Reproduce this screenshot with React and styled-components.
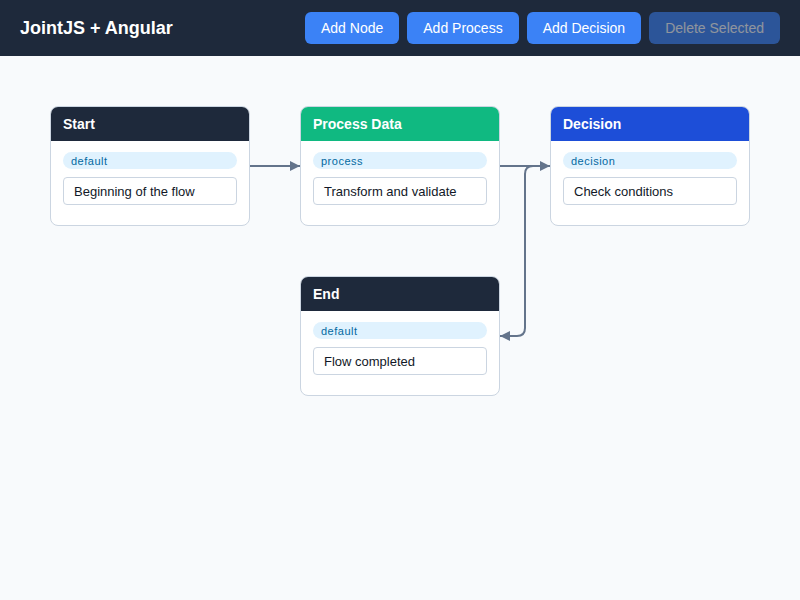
import React from "react"
import styled, { createGlobalStyle } from "styled-components"

const GlobalStyle = createGlobalStyle`
  html, body { margin: 0; padding: 0; }
  body {
    font-family: "Liberation Sans", Arial, sans-serif;
    background: #f8fafc;
  }
  * { box-sizing: border-box; }
`

const Shell = styled.div`
  width: 800px;
  height: 600px;
  display: flex;
  flex-direction: column;
  overflow: hidden;
`

const Toolbar = styled.header`
  height: 56px;
  flex: 0 0 56px;
  background: #1e293b;
  display: flex;
  align-items: center;
  justify-content: space-between;
  padding: 0 20px;
`

const Title = styled.h1`
  margin: 0;
  color: #ffffff;
  font-size: 18px;
  font-weight: 700;
`

const Actions = styled.div`
  display: flex;
  gap: 8px;
`

const ToolButton = styled.button`
  height: 32px;
  padding: 0 16px;
  border: none;
  border-radius: 6px;
  background: #3b82f6;
  color: #ffffff;
  font-family: inherit;
  font-size: 14px;
  cursor: pointer;
  &:disabled {
    opacity: 0.5;
    cursor: default;
  }
`

const Canvas = styled.div`
  position: relative;
  flex: 1;
  background: #f8fafc;
`

const Links = styled.svg`
  position: absolute;
  left: 0;
  top: 0;
  width: 800px;
  height: 544px;
  pointer-events: none;
`

const NodeCard = styled.div`
  position: absolute;
  width: 200px;
  height: 120px;
  background: #ffffff;
  border: 1px solid #cbd5e1;
  border-radius: 8px;
  overflow: hidden;
`

const NodeHeader = styled.div`
  height: 34px;
  background: ${(p) => p.$color};
  color: #ffffff;
  font-size: 14px;
  font-weight: 700;
  display: flex;
  align-items: center;
  padding: 0 12px;
`

const NodeBody = styled.div`
  padding: 11px 12px;
  display: flex;
  flex-direction: column;
  gap: 8px;
`

const Tag = styled.div`
  height: 17px;
  border-radius: 9px;
  background: #e0f2fe;
  color: #0369a1;
  font-size: 11px;
  letter-spacing: 0.5px;
  line-height: 19px;
  padding: 0 8px;
`

const Field = styled.div`
  height: 28px;
  border: 1px solid #cbd5e1;
  border-radius: 4px;
  font-size: 13px;
  color: #111827;
  display: flex;
  align-items: center;
  padding: 0 10px;
`

const nodes = [
  { id: "start", x: 50, y: 50, title: "Start", type: "default", label: "Beginning of the flow", color: "#1e293b" },
  { id: "process", x: 300, y: 50, title: "Process Data", type: "process", label: "Transform and validate", color: "#10b981" },
  { id: "decision", x: 550, y: 50, title: "Decision", type: "decision", label: "Check conditions", color: "#1d4ed8" },
  { id: "end", x: 300, y: 220, title: "End", type: "default", label: "Flow completed", color: "#1e293b" },
]

const Node = ({ node }) => (
  <NodeCard style={{ left: node.x, top: node.y }}>
    <NodeHeader $color={node.color}>{node.title}</NodeHeader>
    <NodeBody>
      <Tag>{node.type}</Tag>
      <Field>{node.label}</Field>
    </NodeBody>
  </NodeCard>
)

const LINK = "#64748b"

export default function App() {
  return (
    <Shell>
      <GlobalStyle />
      <Toolbar>
        <Title>JointJS + Angular</Title>
        <Actions>
          <ToolButton>Add Node</ToolButton>
          <ToolButton>Add Process</ToolButton>
          <ToolButton>Add Decision</ToolButton>
          <ToolButton disabled>Delete Selected</ToolButton>
        </Actions>
      </Toolbar>
      <Canvas>
        <Links viewBox="0 0 800 544">
          <defs>
            <marker id="arrow" viewBox="0 0 10 10" refX="10" refY="5" markerWidth="10" markerHeight="10" markerUnits="userSpaceOnUse" orient="auto">
              <path d="M0 0 L10 5 L0 10 z" fill={LINK} />
            </marker>
          </defs>
          <path d="M250 110 L300 110" stroke={LINK} strokeWidth="2" fill="none" markerEnd="url(#arrow)" />
          <path d="M500 110 L550 110" stroke={LINK} strokeWidth="2" fill="none" markerEnd="url(#arrow)" />
          <path d="M550 110 L533 110 Q525 110 525 118 L525 272 Q525 280 517 280 L500 280" stroke={LINK} strokeWidth="2" fill="none" markerEnd="url(#arrow)" />
        </Links>
        {nodes.map((n) => (
          <Node key={n.id} node={n} />
        ))}
      </Canvas>
    </Shell>
  )
}
